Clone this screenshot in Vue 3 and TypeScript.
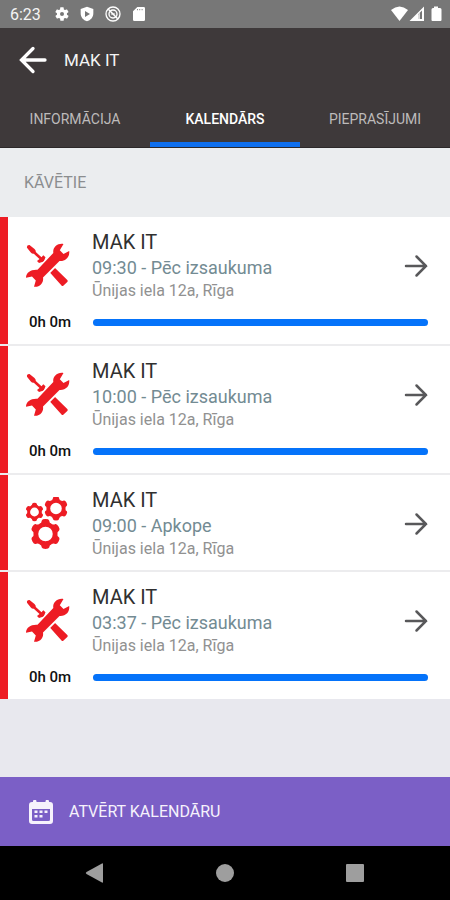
<script setup lang="ts">
import { ref } from 'vue'

interface Visit {
  id: number
  client: string
  time: string
  kind: 'repair' | 'service'
  label: string
  address: string
  spent?: string
  progress?: number
}

const tabs = ['INFORMĀCIJA', 'KALENDĀRS', 'PIEPRASĪJUMI']
const activeTab = ref(1)

const address = 'Ūnijas iela 12a, Rīga'
const visits: Visit[] = [
  { id: 1, client: 'MAK IT', time: '09:30', kind: 'repair', label: 'Pēc izsaukuma', address, spent: '0h 0m', progress: 100 },
  { id: 2, client: 'MAK IT', time: '10:00', kind: 'repair', label: 'Pēc izsaukuma', address, spent: '0h 0m', progress: 100 },
  { id: 3, client: 'MAK IT', time: '09:00', kind: 'service', label: 'Apkope', address },
  { id: 4, client: 'MAK IT', time: '03:37', kind: 'repair', label: 'Pēc izsaukuma', address, spent: '0h 0m', progress: 100 },
]

// Six-toothed gear: centre and outer radius
const gears = [
  { x: 9.5, y: 15, r: 9 },
  { x: 31, y: 11.5, r: 11.8 },
  { x: 20.5, y: 37, r: 14.8 },
]
const teeth = [0, 60, 120, 180, 240, 300]
</script>

<template>
  <div class="screen">
    <div class="status">
      <span class="clock">6:23</span>
      <svg class="s-icon" viewBox="0 0 24 24"><path fill="#fff" fill-rule="evenodd" d="M19.4 13a7.500 7.500 0 0 0 0-2l2.100-1.600a.5.5 0 0 0 .1-.7l-2-3.400a.5.5 0 0 0-.6-.2l-2.500 1a7.300 7.300 0 0 0-1.700-1l-.4-2.700a.5.5 0 0 0-.5-.4h-4a.5.5 0 0 0-.5.4L9 5.100a7.700 7.700 0 0 0-1.700 1l-2.500-1a.5.5 0 0 0-.6.2l-2 3.400a.5.5 0 0 0 .1.700L4.500 11a7.500 7.500 0 0 0 0 2l-2.100 1.600a.5.5 0 0 0-.1.700l2 3.400c.1.200.4.300.6.200l2.500-1a7.300 7.300 0 0 0 1.700 1l.4 2.700c0 .2.200.4.500.4h4c.300 0 .5-.2.500-.4l.4-2.700a7.700 7.700 0 0 0 1.700-1l2.500 1c.2.100.5 0 .6-.2l2-3.400a.5.5 0 0 0-.1-.7zM12 15a3 3 0 1 1 0-6 3 3 0 0 1 0 6z" /></svg>
      <svg class="s-icon" viewBox="0 0 24 24"><path fill="#fff" fill-rule="evenodd" d="M12 1 2.500 4.500V11c0 6 4 10.500 9.500 12 5.500-1.500 9.500-6 9.500-12V4.500zM9 7.500l7.500 4.500L9 16.500z" /></svg>
      <svg class="s-icon wide" viewBox="0 0 24 24" fill="none" stroke="#fff"><circle cx="12" cy="12" r="10.500" stroke-width="2" /><circle cx="12" cy="12" r="6" stroke-width="2" /><path stroke-width="2.200" d="m5 5 14 14M9.500 12h5" /></svg>
      <svg class="s-icon card" viewBox="0 0 24 24"><path fill="#fff" fill-rule="evenodd" d="M9.500 1.500H19a2 2 0 0 1 2 2v17a2 2 0 0 1-2 2H5a2 2 0 0 1-2-2V8zM9 4.500v2h1.300v-2zm3.500 0v2h1.300v-2zm3.500 0v2h1.300v-2z" /></svg>
      <span class="spacer"></span>
      <svg class="signals" viewBox="0 0 52 18">
        <path fill="#fff" d="M1 5Q9.500-2 18 5L9.500 16z" />
        <path fill="#fff" fill-rule="evenodd" d="M19.500 16 34 1.500V16zM28 9.500V14h4V5.500z" />
        <path fill="#ddd" d="M28 9.500 30 7.500V14h-2z" />
        <path fill="#fff" d="M44 1.500h4V3h2q1.500 0 1.500 1.500V15q0 1-1 1h-8q-1 0-1-1V4.500Q41.500 3 43 3h1z" />
      </svg>
    </div>

    <header class="top">
      <div class="bar">
        <button class="back" type="button" aria-label="Atpakaļ">
          <svg viewBox="0 0 28 28" fill="none" stroke="#fff" stroke-width="3.300" stroke-linecap="round"><path d="M26 14H3M14 2.500 2.500 14 14 25.500" /></svg>
        </button>
        <h1>MAK IT</h1>
      </div>
      <nav class="tabs">
        <button
          v-for="(tab, i) in tabs"
          :key="tab"
          type="button"
          :class="['tab', { active: i === activeTab }]"
          @click="activeTab = i"
        >{{ tab }}</button>
      </nav>
    </header>

    <main class="content">
      <h2 class="section">KĀVĒTIE</h2>
      <ul class="list">
        <li v-for="v in visits" :key="v.id" :class="['visit', v.kind]">
          <div class="row">
            <svg v-if="v.kind === 'repair'" class="icon" viewBox="0 0 45 45">
              <path fill="#ed1c24" d="M2 4.800Q1.500 1.800 4.500 2L9.500 6Q11 7.500 10.800 9L16.500 14.300 18.300 12.300 20.500 14.200 18.800 18.500 14 20 12 18 14.500 16 8.800 10.800Q7 11 5.800 9.500z" />
              <path fill="#ed1c24" d="m24 28.500 5-4.500L42.300 37q1 1 0 2L38.500 42.500q-1 1-2 0z" />
              <path stroke="#fff" stroke-width="13" d="M15 31 30 16" />
              <path fill="#ed1c24" d="M38.500 1C32.500 0 27.500 4.500 28.300 10L12.500 26.800C6 26.300 1 29.500 1 34.800L7 33.500 10.800 37.500 9 43.800C15 44.500 19 39.500 18 34.500L34.500 18C40.500 18.500 45 14 44.200 8L38.500 11 34.800 7.300z" />
            </svg>
            <svg v-else class="icon" viewBox="0 0 45 54">
              <g v-for="g in gears" :key="g.r" :transform="`translate(${g.x} ${g.y}) scale(${g.r / 10})`">
                <circle r="6.400" fill="none" stroke="#ed1c24" stroke-width="3" />
                <path v-for="a in teeth" :key="a" :transform="`rotate(${a})`" fill="#ed1c24" d="M-4.200-6.700Q-2.500-7.500-2.500-9.200-2.200-10.200 0-10.200 2.200-10.200 2.500-9.200 2.500-7.500 4.200-6.700z" />
              </g>
            </svg>
            <div class="text">
              <h3>{{ v.client }}</h3>
              <p class="when">{{ v.time }} - {{ v.label }}</p>
              <p class="where">{{ v.address }}</p>
            </div>
            <button class="go" type="button" aria-label="Atvērt">
              <svg viewBox="0 0 24 24" fill="none" stroke="#58585a" stroke-width="2.500" stroke-linecap="round"><path d="M2 12h20M12.500 2.500l9.500 9.500-9.500 9.500" /></svg>
            </button>
          </div>
          <div v-if="v.spent" class="track">
            <span class="spent">{{ v.spent }}</span>
            <div class="rail"><div class="fill" :style="{ width: v.progress + '%' }"></div></div>
          </div>
        </li>
      </ul>
    </main>

    <button class="open" type="button">
      <svg viewBox="0 0 24 24">
        <path fill="#f6f2fc" fill-rule="evenodd" d="M4 2V1.500a1.500 1.500 0 0 1 3.500 0V2h9v-.5a1.500 1.500 0 0 1 3.500 0V2h1a3 3 0 0 1 3 3v16a3 3 0 0 1-3 3H3a3 3 0 0 1-3-3V5a3 3 0 0 1 3-3zM3 9v10.500A1.500 1.500 0 0 0 4.500 21h15a1.500 1.500 0 0 0 1.500-1.500V9z" />
        <path fill="#f6f2fc" d="M5.500 10.500h3V13h-3zm5 0h3V13h-3zm5 0h3V13h-3zm-10 4.500h3v2.500h-3zm5 0h3v2.500h-3z" />
      </svg>
      <span>ATVĒRT KALENDĀRU</span>
    </button>

    <div class="system">
      <button type="button" aria-label="Back"><svg viewBox="0 0 20 20"><path fill="#9e9e9e" d="M18 1v18q0 1-1 .5L1.500 11q-1.500-1 0-2L17 .5q1-.5 1 .5z" /></svg></button>
      <button type="button" aria-label="Home"><svg viewBox="0 0 20 20"><circle cx="10" cy="10" r="9" fill="#9e9e9e" /></svg></button>
      <button type="button" aria-label="Recents"><svg viewBox="0 0 20 20"><rect x="1" y="1" width="18" height="18" rx="1" fill="#9e9e9e" /></svg></button>
    </div>
  </div>
</template>

<style>
body {
  margin: 0;
}
</style>

<style scoped>
.screen {
  display: flex;
  flex-direction: column;
  min-height: 100vh;
  background: #e8e8ee;
  font-family: Roboto, "Liberation Sans", sans-serif;
}
h1, h2, h3, p, ul {
  margin: 0;
  padding: 0;
  font-weight: 400;
}
button {
  margin: 0;
  padding: 0;
  border: 0;
  background: none;
  font: inherit;
  color: inherit;
}
svg {
  display: block;
  flex: none;
}
.status {
  display: flex;
  align-items: center;
  gap: 9px;
  height: 28px;
  padding: 0 8px 0 10px;
  background: #777;
  color: #f4f4f4;
}
.clock {
  font-size: 16px;
  margin-right: 4px;
}
.s-icon {
  width: 16px;
  height: 16px;
}
.wide {
  margin: 0 1px;
}
.spacer {
  flex: 1;
}
.signals {
  width: 52px;
  height: 18px;
}
.top {
  background: #3e393a;
  border-bottom: 1px solid #2c2829;
  color: #fff;
}
.bar {
  display: flex;
  align-items: center;
  gap: 17px;
  height: 64px;
  padding: 0 19px;
}
.back svg {
  width: 28px;
  height: 28px;
}
h1 {
  font-size: 17px;
  color: #f4f4f4;
}
.tabs {
  display: flex;
}
.tab {
  flex: 1;
  height: 55px;
  border-top: 4px solid transparent;
  border-bottom: 5px solid transparent;
  font-size: 14px;
  color: #bdbbbb;
}
.active {
  border-bottom-color: #0e6fee;
  font-weight: 500;
  color: #fff;
}
.content {
  flex: 1;
}
.section {
  padding: 0 24px;
  background: #ebedef;
  font-size: 16px;
  line-height: 69px;
  color: #8b8d8f;
}
.list {
  display: flex;
  flex-direction: column;
  gap: 2px;
  background: #ececee;
  list-style: none;
}
.visit {
  padding: 12px 22px 13px 17px;
  border-left: 8px solid #ed1c24;
  background: #fff;
}
.service {
  padding-bottom: 10px;
}
.row {
  display: flex;
  align-items: center;
}
.icon {
  width: 45px;
  margin-right: 22px;
}
.text {
  flex: 1;
}
h3 {
  font-size: 20px;
  line-height: 26px;
  color: #303030;
}
.when {
  font-size: 18px;
  line-height: 25px;
  color: #738b93;
}
.where {
  font-size: 16px;
  line-height: 22px;
  color: #919191;
}
.go svg {
  width: 24px;
  height: 24px;
}
.track {
  display: flex;
  align-items: center;
  gap: 22px;
  margin-top: 11px;
  height: 18px;
}
.spent {
  width: 42px;
  padding-left: 4px;
  white-space: nowrap;
  font-size: 15px;
  font-weight: 500;
  color: #111;
}
.rail {
  flex: 1;
  height: 7px;
  border-radius: 4px;
  background: #dfe3e8;
}
.fill {
  height: 100%;
  border-radius: 4px;
  background: #0573fa;
}
.open {
  display: flex;
  align-items: center;
  gap: 16px;
  height: 69px;
  padding: 0 29px;
  background: #7b5fc6;
  font-size: 16px;
  color: #f6f2fc;
}
.open svg {
  width: 24px;
  height: 24px;
}
.system {
  display: flex;
  justify-content: center;
  gap: 110px;
  height: 54px;
  background: #000;
}
.system svg {
  width: 20px;
  height: 20px;
}
</style>
